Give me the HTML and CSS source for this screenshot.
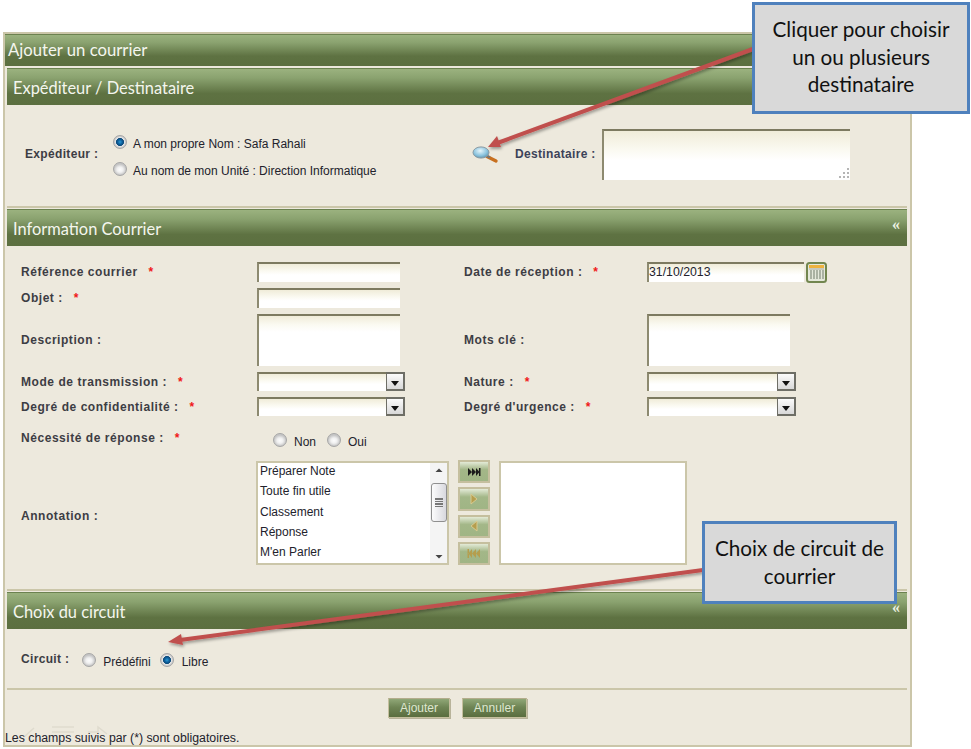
FILE: index.html
```html
<!DOCTYPE html>
<html lang="fr">
<head>
<meta charset="utf-8">
<title>Ajouter un courrier</title>
<link rel="stylesheet" href="styles.css">
</head>
<body>
<main class="panel">
  <h1 class="bar title">Ajouter un courrier</h1>

  <section class="section">
    <h2 class="bar head">Expéditeur / Destinataire</h2>
    <div class="sender">
      <span class="label sender-label">Expéditeur :</span>
      <div class="sender-options">
        <label class="opt"><input class="radio" type="radio" name="exp" checked><span>A mon propre Nom : Safa Rahali</span></label>
        <label class="opt"><input class="radio" type="radio" name="exp"><span>Au nom de mon Unité : Direction Informatique</span></label>
      </div>
      <svg class="lens" width="27" height="18" viewBox="0 0 27 18" aria-hidden="true">
        <defs>
          <radialGradient id="glass" cx="45%" cy="35%" r="70%"><stop offset="0" stop-color="#e8f6fb"/><stop offset="0.6" stop-color="#8cc4de"/><stop offset="1" stop-color="#5b8da6"/></radialGradient>
        </defs>
        <path d="M15 10.500 L24 15" stroke="#c8701f" stroke-width="3.400" stroke-linecap="round"/>
        <path d="M14 9.500 L18 11.500" stroke="#777" stroke-width="2.400"/>
        <ellipse cx="9" cy="6.500" rx="8" ry="5.600" fill="url(#glass)" stroke="#8a9aa2" stroke-width="1"/>
      </svg>
      <span class="label dest-label">Destinataire :</span>
      <div class="field dest">
        <svg class="grip" width="13" height="13" viewBox="0 0 13 13" aria-hidden="true"><g fill="#b5b5b5"><rect x="10" y="1" width="2" height="2"/><rect x="6" y="5" width="2" height="2"/><rect x="10" y="5" width="2" height="2"/><rect x="2" y="9" width="2" height="2"/><rect x="6" y="9" width="2" height="2"/><rect x="10" y="9" width="2" height="2"/></g></svg>
      </div>
    </div>
  </section>

  <section class="section">
    <h2 class="bar head">Information Courrier<span class="fold">«</span></h2>
    <div class="info">
      <div class="label">Référence courrier <b class="req">*</b></div>
      <div class="field w143 h20"></div>
      <div class="label">Date de réception : <b class="req">*</b></div>
      <div class="date shift"><div class="field w157 h20 value">31/10/2013</div>
        <svg class="cal" width="21" height="21" viewBox="0 0 21 21" aria-hidden="true"><rect x="1" y="1" width="19" height="19" rx="2.500" fill="#e4e8da" stroke="#72864f" stroke-width="2"/><rect x="3" y="3" width="15" height="3" fill="#eeb23e"/><path d="M5 8v9M8 8v9M11 8v9M14 8v9M17 8v9" stroke="#8c9685" stroke-width="1.300"/><path d="M3 7h15" stroke="#a8a8a0"/></svg>
      </div>

      <div class="label">Objet : <b class="req">*</b></div>
      <div class="field w143 h20"></div>
      <div></div><div></div>

      <div class="label">Description :</div>
      <div class="field w143 h52"></div>
      <div class="label">Mots clé :</div>
      <div class="field w143 h52 shift"></div>

      <div class="label">Mode de transmission : <b class="req">*</b></div>
      <div class="select"><div class="field grow"></div><span class="drop"></span></div>
      <div class="label">Nature : <b class="req">*</b></div>
      <div class="select shift wide"><div class="field grow"></div><span class="drop"></span></div>

      <div class="label">Degré de confidentialité : <b class="req">*</b></div>
      <div class="select"><div class="field grow"></div><span class="drop"></span></div>
      <div class="label">Degré d'urgence : <b class="req">*</b></div>
      <div class="select shift wide"><div class="field grow"></div><span class="drop"></span></div>

      <div class="label need">Nécessité de réponse : <b class="req">*</b></div>
      <div class="radios need-radios">
        <label class="opt"><input class="radio" type="radio" name="rep"><span>Non</span></label>
        <label class="opt"><input class="radio" type="radio" name="rep"><span>Oui</span></label>
      </div>
      <div></div><div></div>

      <div class="label annot">Annotation :</div>
      <div class="picker">
        <div class="list">
          <ul class="items">
            <li>Préparer Note</li><li>Toute fin utile</li><li>Classement</li><li>Réponse</li><li>M'en Parler</li>
          </ul>
          <div class="scroll">
            <svg width="16" height="14" viewBox="0 0 16 14" aria-hidden="true"><path d="M4.500 9 L8 5.500 L11.500 9Z" fill="#444"/></svg>
            <div class="thumb"><i></i><i></i><i></i><i></i></div>
            <svg class="down" width="16" height="14" viewBox="0 0 16 14" aria-hidden="true"><path d="M4.500 6 L8 9.500 L11.500 6Z" fill="#444"/></svg>
          </div>
        </div>
        <div class="moves">
          <button class="move" type="button"><svg width="14" height="10" viewBox="0 0 14 10"><path d="M1 1l4 4-4 4zM5 1l4 4-4 4zM9 1l3.500 4L9 9z M12 1h1.500v8H12z" fill="#1c1c1c"/></svg></button>
          <button class="move" type="button"><svg width="10" height="12" viewBox="0 0 10 12"><path d="M2 1l6 5-6 5z" fill="#b59e4e" stroke="#d8ca90"/></svg></button>
          <button class="move" type="button"><svg width="10" height="12" viewBox="0 0 10 12"><path d="M8 1L2 6l6 5z" fill="#b59e4e" stroke="#d8ca90"/></svg></button>
          <button class="move" type="button"><svg width="14" height="11" viewBox="0 0 14 11"><path d="M13 1L9 5.500l4 4.500zM9 1L5 5.500 9 10zM5 1L1.500 5.500 5 10z M.5 1H2v9H.5z" fill="#b59e4e"/></svg></button>
        </div>
        <div class="list right"></div>
      </div>
    </div>
  </section>

  <section class="section last">
    <h2 class="bar head">Choix du circuit<span class="fold">«</span></h2>
    <div class="circuit">
      <span class="label">Circuit :</span>
      <label class="opt"><input class="radio" type="radio" name="cir"><span>Prédéfini</span></label>
      <label class="opt"><input class="radio" type="radio" name="cir" checked><span>Libre</span></label>
    </div>
  </section>

  <div class="actions">
    <button class="btn" type="button">Ajouter</button>
    <button class="btn" type="button">Annuler</button>
  </div>
  <svg class="ghost" width="90" height="16" viewBox="0 0 90 16" aria-hidden="true"><path d="M6 14 L16 5 M34 4h22M34 9h22M70 9h10v-5l9 7" fill="none" stroke="#dfdbce" stroke-width="1.500"/></svg>
  <p class="note">Les champs suivis par (*) sont obligatoires.</p>
</main>

<svg class="arrows" width="971" height="749" viewBox="0 0 971 749" aria-hidden="true">
  <defs>
    <filter id="sh" x="-5%" y="-20%" width="110%" height="140%"><feDropShadow dx="1" dy="2" stdDeviation="1.500" flood-color="#000" flood-opacity=".35"/></filter>
  </defs>
  <g filter="url(#sh)">
    <path d="M753 49 L496 143.500" stroke="#c0504d" stroke-width="4" fill="none"/>
    <path d="M488 147 L497 136 L501 147Z" fill="#c0504d"/>
    <path d="M703 570 L180 640" stroke="#c0504d" stroke-width="4" fill="none"/>
    <path d="M168 642 L181 634 L183 645Z" fill="#c0504d"/>
  </g>
</svg>
<aside class="callout top">Cliquer pour choisir un ou plusieurs destinataire</aside>
<aside class="callout low">Choix de circuit de courrier</aside>
</body>
</html>
```

FILE: styles.css
```css
* { box-sizing: border-box; }
html, body { margin: 0; padding: 0; background: #fff; }
body { width: 971px; height: 749px; overflow: hidden; position: relative; font: 12px "Liberation Sans", Arial, sans-serif; color: #22222c; }

.panel { width: 909px; height: 715px; margin: 32px 0 0 3px; border: 2px solid #cbc6a9; background: #ede9dd; display: flex; flex-direction: column; position: relative; }

.bar { margin: 0; color: #f4f6ee; font-family: Lato, "Open Sans", sans-serif; font-weight: 400; background: linear-gradient(#9bb27f 0%, #8aa26f 25%, #5e7242 68%, #5c6f40 100%); position: relative; }
.title { height: 32px; line-height: 31px; padding-left: 3px; font-size: 16.700px; border-top: 1px solid #6c8250; }
.section { margin: 2px 3px 0 2px; border-bottom: 2px solid #cbc6a9; }
.section + .section { margin-top: 1px; }
.head { height: 37px; line-height: 35px; padding: 1px 0 0 6px; font-size: 16.400px; border-top: 1px solid #6c8250; }
.fold { position: absolute; right: 7px; top: 5px; font: bold 16px/20px "Liberation Serif", serif; color: #eef2e4; }

.label { font-weight: 700; color: #3d3d44; font-size: 12px; white-space: nowrap; letter-spacing: .33px; }
.info .label { letter-spacing: .55px; }
.req { color: #f01818; margin-left: 7px; font-weight: 700; }

.sender { height: 101px; display: flex; align-items: flex-start; position: relative; padding-left: 18px; }
.sender-label { margin-top: 42px; width: 87px; }
.sender-options { margin-top: 32px; width: 336px; display: flex; flex-direction: column; gap: 13px; margin-left: 1px; }
.lens { margin-top: 41px; margin-left: 23px; flex: none; }
.dest-label { margin-top: 42px; margin-left: 16px; width: 87px; color: #3c4258; }
.dest { width: 248px; height: 51px; margin-top: 24px; position: relative; }
.grip { position: absolute; right: 0; bottom: 0; }

.opt { display: inline-flex; align-items: center; gap: 6px; line-height: 14px; }
.radio { appearance: none; -webkit-appearance: none; width: 14px; height: 14px; margin: 0; flex: none; border-radius: 50%; border: 1px solid #a6a6a6; background: radial-gradient(closest-side at 50% 55%, #fdfdfd 0%, #f0f0f0 50%, #c6c6c6 100%); position: relative; top: -2px; }
.radio:checked { background: radial-gradient(closest-side at 50% 50%, #2a9bd6 0%, #0e5f9c 38%, #0c4a7a 62%, #e8e8e8 72%, #c6c6c6 100%); }

.field { background: linear-gradient(#f0ecd9 0%, #fbfaf2 40%, #fff 60%); border-top: 2px solid #7d7a60; border-left: 2px solid #8d8a70; }
.w143 { width: 143px; }
.w157 { width: 157px; }
.h20 { height: 20px; }
.h52 { height: 52px; background: linear-gradient(#f0ecd9 0%, #fbfaf2 18%, #fff 32%); }
.value { line-height: 17px; padding-left: 0; font-size: 12.300px; color: #22222c; }
.date { display: flex; gap: 2px; align-items: center; }
.cal { flex: none; }
.shift { margin-left: -1px; }

.info { display: grid; grid-template-columns: 236px 207px 184px 1fr; grid-template-rows: 20px 20px 52px 19px 19px 33px 104px; row-gap: 6px; align-items: center; padding: 16px 0 0 14px; height: 343px; }
.select { display: flex; height: 19px; width: 148px; }
.wide { width: 149px; }
.grow { flex: 1; height: 19px; }
.drop { flex: none; width: 19px; height: 19px; border: 2px solid #6e6e66; border-left-width: 1px; background: linear-gradient(#fbfbfb, #d8d8d8); position: relative; margin-left: -1px; }
.drop::after { content: ""; position: absolute; left: 4px; top: 7px; border: 4px solid transparent; border-top: 5px solid #111; border-bottom: 0; }
.need { align-self: start; padding-top: 9px; }
.need-radios { display: flex; gap: 11px; padding: 13px 0 0 16px; align-self: start; }
.need-radios .opt { gap: 7px; }
.annot { padding-top: 5px; }

.picker { grid-column: 2 / 5; display: flex; margin-left: -1px; height: 104px; }
.list { width: 193px; height: 104px; border: 2px solid #cbc6a9; background: #fff; display: flex; }
.items { list-style: none; margin: -1px 0 0; padding: 0 0 0 2px; flex: 1; }
.items li { height: 20.300px; line-height: 18px; font-size: 12px; }
.scroll { width: 17px; background: #f4f4f4; display: flex; flex-direction: column; align-items: center; position: relative; }
.scroll svg { flex: none; }
.down { margin-top: auto; }
.thumb { width: 16px; height: 39px; border: 1px solid #8f8f8f; border-radius: 3px; background: linear-gradient(90deg, #fcfcfc, #d8d8de); margin-top: 6px; display: flex; flex-direction: column; justify-content: center; align-items: center; gap: 1px; }
.thumb i { display: block; width: 8px; height: 1.500px; background: #777; }
.moves { display: flex; flex-direction: column; gap: 4px; margin: -1px 9px 0 9px; }
.move { width: 32px; height: 24px; padding: 0; border: 2px solid #c5bf9e; background: linear-gradient(#e3ead6 0%, #a3b788 40%, #a0b585 100%); display: flex; align-items: center; justify-content: center; }
.right { width: 188px; }

.last { height: 98px; margin-bottom: 0; }
.circuit { display: flex; align-items: center; padding: 23px 0 0 14px; gap: 13px; }
.circuit .label { position: relative; top: -2px; }
.circuit .opt { padding-top: 3px; gap: 7px; }
.circuit .opt + .opt { margin-left: -4px; gap: 8px; }

.actions { display: flex; gap: 12px; padding: 8px 0 0 383px; }
.btn { width: 62px; height: 20px; padding: 0; border: 1px solid #c5bf9e; border-top-color: #b3ad8c; background: linear-gradient(#90a777 0%, #6f8555 45%, #5a6d3f 100%); color: #dfe7d0; font: 12px "Liberation Sans", Arial, sans-serif; box-shadow: 1px 1px 0 #b8b39a; }
.btn + .btn { width: 65px; }
.ghost { position: absolute; left: 13px; top: 689px; }
.note { margin: auto 0 0 0; font-size: 12.300px; line-height: 14px; color: #22222c; position: relative; }

.arrows { position: absolute; left: 0; top: 0; pointer-events: none; }
.callout { position: absolute; background: #d9d9d9; border: 3px solid #4f81bd; color: #111; font: 20.700px/27.500px Lato, "Open Sans", sans-serif; text-align: center; }
.top { left: 752px; top: 2px; width: 218px; height: 112px; padding: 11px 4px 0; }
.low { left: 702px; top: 521px; width: 195px; height: 83px; padding: 11px 4px 0; }
```
